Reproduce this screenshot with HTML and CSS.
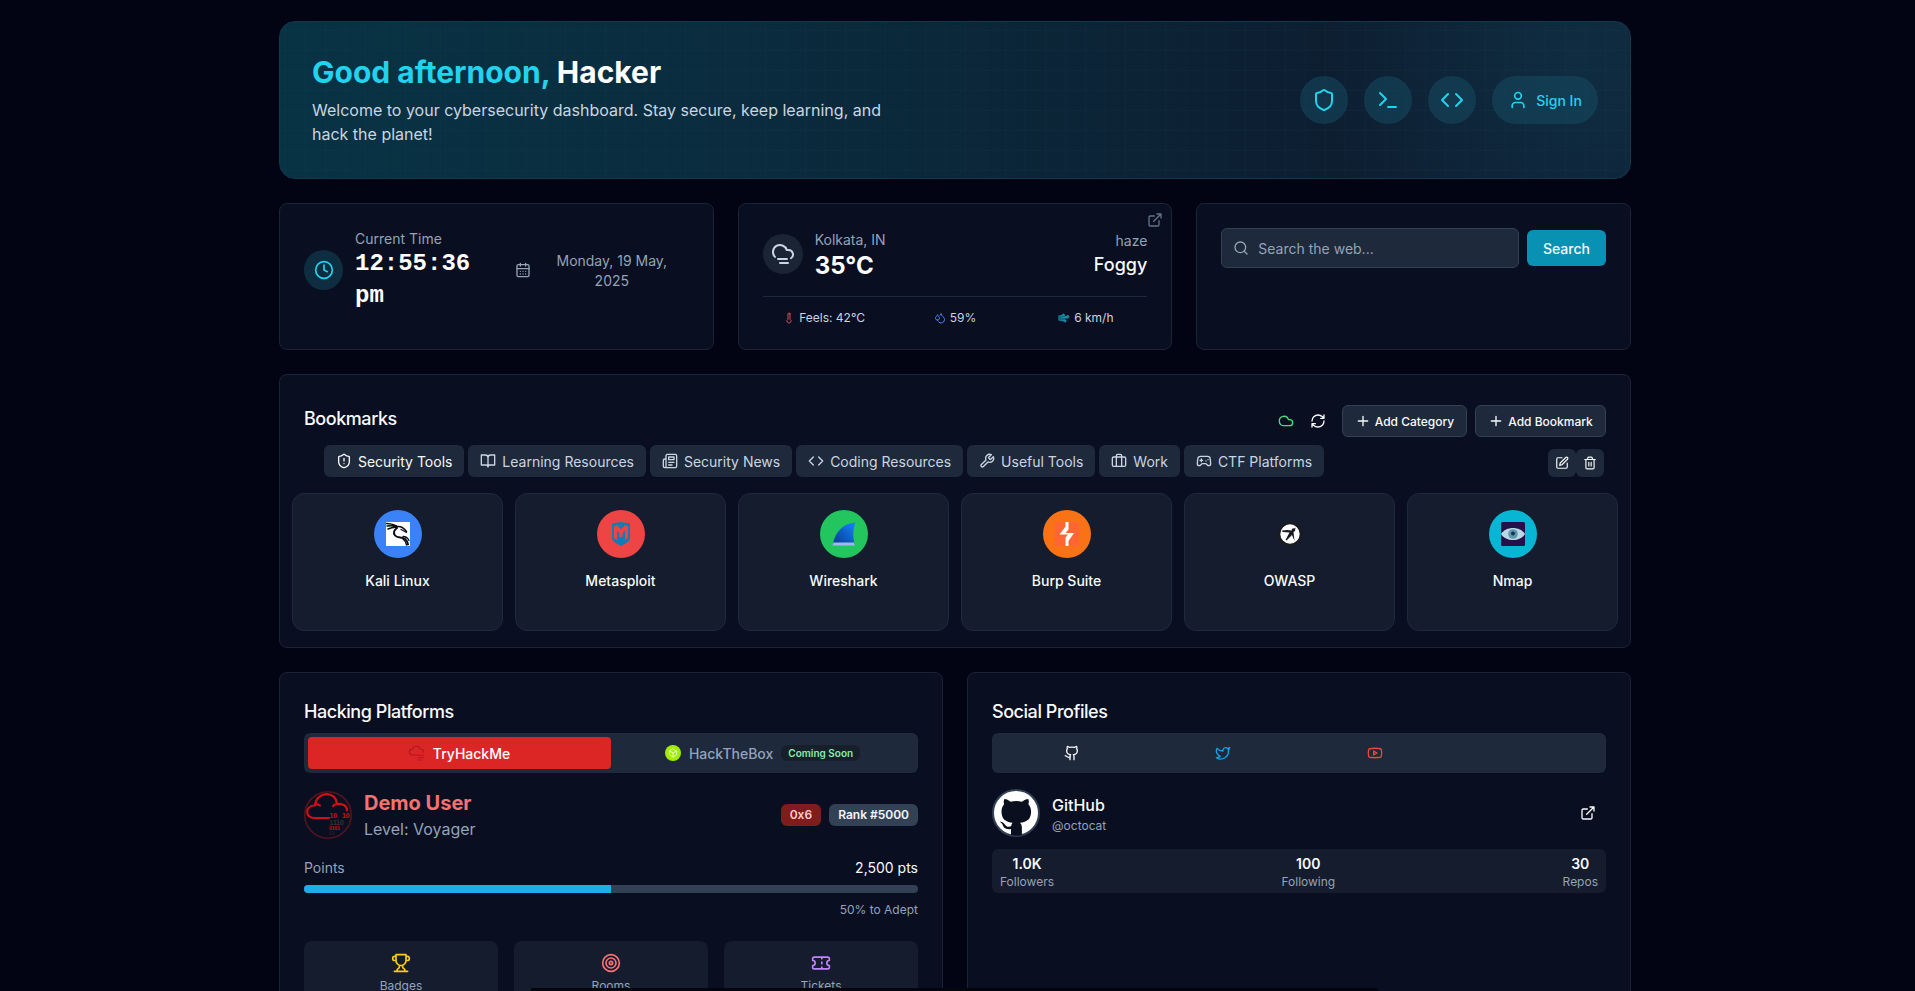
FILE: index.html
```html
<!DOCTYPE html>
<html lang="en">
<head>
<meta charset="utf-8">
<title>Cybersecurity Dashboard</title>
<link rel="stylesheet" href="styles.css">
</head>
<body>
<svg class="defs" aria-hidden="true">
  <symbol id="shield" viewBox="0 0 24 24"><path d="M20 13c0 5-3.5 7.5-7.66 8.95a1 1 0 0 1-.67-.01C7.500 20.500 4 18 4 13V6a1 1 0 0 1 1-1c2 0 4.500-1.200 6.240-2.720a1.170 1.170 0 0 1 1.520 0C14.510 3.810 17 5 19 5a1 1 0 0 1 1 1z"/></symbol>
  <symbol id="terminal" viewBox="0 0 24 24"><path d="m4 17 6-6-6-6M12 19h8"/></symbol>
  <symbol id="code" viewBox="0 0 24 24"><path d="m16 18 6-6-6-6M8 6l-6 6 6 6"/></symbol>
  <symbol id="user" viewBox="0 0 24 24"><path d="M19 21v-2a4 4 0 0 0-4-4H9a4 4 0 0 0-4 4v2"/><circle cx="12" cy="7" r="4"/></symbol>
  <symbol id="clock" viewBox="0 0 24 24"><circle cx="12" cy="12" r="10"/><path d="M12 6v6l4 2"/></symbol>
  <symbol id="calendar" viewBox="0 0 24 24"><rect x="3" y="4" width="18" height="18" rx="2"/><path d="M16 2v4M8 2v4M3 10h18M8 14h.01M12 14h.01M16 14h.01M8 18h.01M12 18h.01M16 18h.01"/></symbol>
  <symbol id="fog" viewBox="0 0 24 24"><path d="M4 14.899A7 7 0 1 1 15.710 8h1.790a4.500 4.500 0 0 1 2.500 8.242M16 17H7M17 21H9"/></symbol>
  <symbol id="external" viewBox="0 0 24 24"><path d="M15 3h6v6M10 14 21 3M18 13v6a2 2 0 0 1-2 2H5a2 2 0 0 1-2-2V8a2 2 0 0 1 2-2h6"/></symbol>
  <symbol id="thermo" viewBox="0 0 24 24"><path d="M14 4v10.540a4 4 0 1 1-4 0V4a2 2 0 0 1 4 0Z"/></symbol>
  <symbol id="drops" viewBox="0 0 24 24"><path d="M7 16.300c2.200 0 4-1.830 4-4.050 0-1.160-.57-2.260-1.710-3.190S7.290 6.750 7 5.300c-.29 1.450-1.140 2.840-2.290 3.760S3 11.100 3 12.250c0 2.220 1.800 4.050 4 4.050z"/><path d="M12.560 6.600A10.970 10.970 0 0 0 14 3.020c.5 2.500 2 4.900 4 6.500s3 3.500 3 5.500a6.980 6.980 0 0 1-11.910 4.970"/></symbol>
  <symbol id="wind" viewBox="0 0 24 24"><path fill="currentColor" d="M17.700 7.700a2.500 2.500 0 1 1 1.800 4.300H2"/><path fill="currentColor" d="M9.600 4.600A2 2 0 1 1 11 8H2"/><path fill="currentColor" d="M12.600 19.400A2 2 0 1 0 14 16H2"/><path d="M2 8v8M5 10h12M5 14h9"/></symbol>
  <symbol id="search" viewBox="0 0 24 24"><circle cx="11" cy="11" r="8"/><path d="m21 21-4.300-4.300"/></symbol>
  <symbol id="cloud" viewBox="0 0 24 24"><path d="M17.500 19H9a7 7 0 1 1 6.710-9h1.790a4.500 4.500 0 1 1 0 9Z"/></symbol>
  <symbol id="refresh" viewBox="0 0 24 24"><path d="M3 12a9 9 0 0 1 9-9 9.750 9.750 0 0 1 6.740 2.740L21 8M21 3v5h-5M21 12a9 9 0 0 1-9 9 9.750 9.750 0 0 1-6.740-2.740L3 16M8 16H3v5"/></symbol>
  <symbol id="plus" viewBox="0 0 24 24"><path d="M5 12h14M12 5v14"/></symbol>
  <symbol id="book" viewBox="0 0 24 24"><path d="M2 3h6a4 4 0 0 1 4 4v14a3 3 0 0 0-3-3H2zM22 3h-6a4 4 0 0 0-4 4v14a3 3 0 0 1 3-3h7z"/></symbol>
  <symbol id="news" viewBox="0 0 24 24"><path d="M4 22h16a2 2 0 0 0 2-2V4a2 2 0 0 0-2-2H8a2 2 0 0 0-2 2v16a2 2 0 0 1-4 0v-9a2 2 0 0 1 2-2h2M18 14h-8M15 18h-5M10 6h8v4h-8z"/></symbol>
  <symbol id="wrench" viewBox="0 0 24 24"><path d="M14.700 6.300a1 1 0 0 0 0 1.400l1.600 1.600a1 1 0 0 0 1.400 0l3.770-3.770a6 6 0 0 1-7.940 7.940l-6.910 6.910a2.120 2.120 0 0 1-3-3l6.910-6.910a6 6 0 0 1 7.940-7.940l-3.760 3.760z"/></symbol>
  <symbol id="case" viewBox="0 0 24 24"><path d="M16 20V4a2 2 0 0 0-2-2h-4a2 2 0 0 0-2 2v16"/><rect x="2" y="6" width="20" height="14" rx="2"/></symbol>
  <symbol id="game" viewBox="0 0 24 24"><path d="M6 11h4M8 9v4M15 12h.01M18 10h.01M17.320 5H6.680a4 4 0 0 0-3.978 3.590C2.604 9.416 2 14.456 2 16a3 3 0 0 0 3 3c1 0 1.500-.5 2-1l1.414-1.414A2 2 0 0 1 9.828 16h4.344a2 2 0 0 1 1.414.586L17 18c.5.5 1 1 2 1a3 3 0 0 0 3-3c0-1.545-.604-6.584-.685-7.258A4 4 0 0 0 17.320 5z"/></symbol>
  <symbol id="edit" viewBox="0 0 24 24"><path d="M12 3H5a2 2 0 0 0-2 2v14a2 2 0 0 0 2 2h14a2 2 0 0 0 2-2v-7"/><path d="M18.375 2.625a2.121 2.121 0 1 1 3 3L12 15l-4 1 1-4z"/></symbol>
  <symbol id="trash" viewBox="0 0 24 24"><path d="M3 6h18M19 6v14a2 2 0 0 1-2 2H7a2 2 0 0 1-2-2V6M8 6V4a2 2 0 0 1 2-2h4a2 2 0 0 1 2 2v2M10 11v6M14 11v6"/></symbol>
  <symbol id="github" viewBox="0 0 24 24"><path d="M15 22v-4a4.800 4.800 0 0 0-1-3.500c3 0 6-2 6-5.500.08-1.250-.27-2.480-1-3.500.28-1.150.28-2.350 0-3.500 0 0-1 0-3 1.500-2.640-.5-5.360-.5-8 0C6 2 5 2 5 2c-.3 1.150-.3 2.350 0 3.500A5.403 5.403 0 0 0 4 9c0 3.500 3 5.500 6 5.500-.39.490-.68 1.050-.85 1.650-.17.600-.22 1.230-.15 1.850v4"/><path d="M9 18c-4.510 2-5-2-7-2"/></symbol>
  <symbol id="twitter" viewBox="0 0 24 24"><path d="M22 4s-.7 2.100-2 3.400c1.600 10-9.400 17.300-18 11.600 2.200.1 4.400-.6 6-2C3 15.500.5 9.600 3 5c2.200 2.600 5.600 4.100 9 4-.9-4.200 4-6.600 7-3.800 1.100 0 3-1.200 3-1.200z"/></symbol>
  <symbol id="youtube" viewBox="0 0 24 24"><path d="M2.500 17a24.120 24.120 0 0 1 0-10 2 2 0 0 1 1.400-1.400 49.560 49.560 0 0 1 16.200 0A2 2 0 0 1 21.500 7a24.120 24.120 0 0 1 0 10 2 2 0 0 1-1.400 1.400 49.550 49.550 0 0 1-16.200 0A2 2 0 0 1 2.500 17"/><path d="m10 15 5-3-5-3z"/></symbol>
  <symbol id="trophy" viewBox="0 0 24 24"><path d="M6 9H4.500a2.500 2.500 0 0 1 0-5H6M18 9h1.500a2.500 2.500 0 0 0 0-5H18M4 22h16M10 14.660V17c0 .55-.47.980-.97 1.210C7.850 18.750 7 20.240 7 22M14 14.660V17c0 .55.470.980.970 1.210C16.150 18.750 17 20.240 17 22M18 2H6v7a6 6 0 0 0 12 0V2Z"/></symbol>
  <symbol id="target" viewBox="0 0 24 24"><circle cx="12" cy="12" r="10"/><circle cx="12" cy="12" r="6"/><circle cx="12" cy="12" r="2"/></symbol>
  <symbol id="ticket" viewBox="0 0 24 24"><path d="M2 9a3 3 0 0 1 0 6v2a2 2 0 0 0 2 2h16a2 2 0 0 0 2-2v-2a3 3 0 0 1 0-6V7a2 2 0 0 0-2-2H4a2 2 0 0 0-2 2ZM13 5v2M13 17v2M13 11v2"/></symbol>
</svg>

<main class="page">
  <header class="hero">
    <div class="hero-text">
      <h1><span class="accent">Good afternoon,</span> Hacker</h1>
      <p>Welcome to your cybersecurity dashboard. Stay secure, keep learning, and hack the planet!</p>
    </div>
    <nav class="hero-nav">
      <a class="round"><svg class="i24"><use href="#shield"/></svg></a>
      <a class="round"><svg class="i24"><use href="#terminal"/></svg></a>
      <a class="round"><svg class="i24"><use href="#code"/></svg></a>
      <a class="round sign-in"><svg class="i20"><use href="#user"/></svg><span>Sign In</span></a>
    </nav>
  </header>

  <div class="widgets">
    <section class="card time-card">
      <div class="time-row">
        <span class="chip chip-cyan"><svg class="i20"><use href="#clock"/></svg></span>
        <div class="time-text">
          <div class="label">Current Time</div>
          <div class="clock">12:55:36 pm</div>
        </div>
        <svg class="i16 cal"><use href="#calendar"/></svg>
        <div class="date">Monday, 19 May, 2025</div>
      </div>
    </section>

    <section class="card weather">
      <svg class="i16 weather-link"><use href="#external"/></svg>
      <div class="weather-top">
        <span class="chip chip-slate"><svg class="i24"><use href="#fog"/></svg></span>
        <div class="place">
          <div>Kolkata, IN</div>
          <div class="temp">35°C</div>
        </div>
        <div class="cond">
          <div>haze</div>
          <div class="cond-name">Foggy</div>
        </div>
      </div>
      <div class="weather-stats">
        <span><svg class="i12 red"><use href="#thermo"/></svg>Feels: 42°C</span>
        <span><svg class="i12 blue"><use href="#drops"/></svg>59%</span>
        <span><svg class="i12 cyan"><use href="#wind"/></svg>6 km/h</span>
      </div>
    </section>

    <section class="card search-card">
      <div class="search-row">
        <div class="search-box"><svg class="i16"><use href="#search"/></svg><span>Search the web...</span></div>
        <button class="search-btn">Search</button>
      </div>
    </section>
  </div>

  <section class="card bookmarks">
    <div class="bm-head">
      <h2>Bookmarks</h2>
      <div class="bm-actions">
        <svg class="i16 green"><use href="#cloud"/></svg>
        <svg class="i16 sync"><use href="#refresh"/></svg>
        <button class="btn"><svg class="i16"><use href="#plus"/></svg>Add Category</button>
        <button class="btn btn-last"><svg class="i16"><use href="#plus"/></svg>Add Bookmark</button>
      </div>
    </div>
    <div class="tabs-row">
      <div class="tabs">
        <span class="tab tab-on"><svg class="i16" viewBox="0 0 24 24"><use href="#shield"/><path d="M12 8v4M12 16h.01"/></svg>Security Tools</span>
        <span class="tab"><svg class="i16"><use href="#book"/></svg>Learning Resources</span>
        <span class="tab"><svg class="i16"><use href="#news"/></svg>Security News</span>
        <span class="tab"><svg class="i16"><use href="#code"/></svg>Coding Resources</span>
        <span class="tab"><svg class="i16"><use href="#wrench"/></svg>Useful Tools</span>
        <span class="tab"><svg class="i16"><use href="#case"/></svg>Work</span>
        <span class="tab"><svg class="i16"><use href="#game"/></svg>CTF Platforms</span>
      </div>
      <div class="tools">
        <span class="tool"><svg class="i14"><use href="#edit"/></svg></span>
        <span class="tool"><svg class="i14"><use href="#trash"/></svg></span>
      </div>
    </div>
    <div class="tiles">
      <a class="tile"><span class="logo logo-blue"><svg class="pic" viewBox="0 0 24 24"><path fill="#fff" d="M0 0h24v24H0z"/><g fill="none" stroke="#0b0d12" stroke-linecap="round"><path stroke-width="1.500" d="M.5 1.500c4 0 7 .8 10 2.500M1 4c4-.5 7-.3 10 .5M2 7c3-1.500 6-2 9-1.800M11 4.500c4-.5 7 1.500 9.500 5"/><path stroke-width="2" d="M11 6c-3 2-4 5-2 7.500 2.500 3 7 1 10 3.500 1.800 1.500 2.500 3 3 5.500"/><path stroke-width="1.300" d="M15 7.500c2 1 4 2 5.500 3M17 14.500c3 0 5 2 6 4M17 17c2 1.500 3 3.500 3.500 6"/></g></svg></span>Kali Linux</a>
      <a class="tile"><span class="logo logo-red"><svg class="pic" viewBox="0 0 24 24"><path fill="#1679b8" d="M3 1.500 12 0l9 1.500V16c0 3-5 6-9 8-4-2-9-5-9-8z"/><path fill="#ef4444" d="M5 4.500 8 3l4 4.500L16 3l3 1.500V16l-3 2V8.500l-2.500 3V15h-3v-3.500L8 8.500V18l-3-2z"/></svg></span>Metasploit</a>
      <a class="tile"><span class="logo logo-green"><svg class="pic" viewBox="0 0 24 24"><defs><linearGradient id="fin" x1="0" y1="1" x2="1" y2="0"><stop offset="0" stop-color="#06398e"/><stop offset="1" stop-color="#1686ff"/></linearGradient></defs><path fill="url(#fin)" d="M1 22C3 10 11 1.500 23.500.5 20.500 8 21 15 22.500 22z"/><path fill="#9cb9f0" d="M1.500 20.500h20.500l.8 3H.5z"/></svg></span>Wireshark</a>
      <a class="tile"><span class="logo logo-orange"><svg class="pic" viewBox="0 0 24 24"><path fill="#ff6633" d="M0 0h24v24H0z"/><path fill="#fff" d="M13.500 0v7.500l-3 3.500H19l-5.500 8v5h-3v-8.500l2.500-3H4.500l6-8V0z"/></svg></span>Burp Suite</a>
      <a class="tile"><span class="logo"><svg class="pic" viewBox="0 0 24 24"><circle cx="12" cy="12" r="10.700" fill="#fff" stroke="#1b1b1b"/><g fill="#171b20"><path d="m4 8.500 5.500-.5 4 .5L18 5.500l-2.500 4.500 1 9-2.500-6-5.500 5.500-1-.5 4-7.500-7-.5z"/><circle cx="15.500" cy="8" r="1.800"/></g></svg></span>OWASP</a>
      <a class="tile"><span class="logo logo-cyan"><svg class="pic" viewBox="0 0 24 24"><rect width="24" height="24" rx="1.500" fill="#24104a"/><path fill="#b9d9e6" d="M0 12c5-8 19-8 24 0-5 8-19 8-24 0z"/><circle cx="12" cy="12" r="4.800" fill="#5d97ad"/><circle cx="12" cy="11.500" r="2" fill="#17324b"/></svg></span>Nmap</a>
    </div>
  </section>

  <div class="columns">
    <section class="card panel">
      <h2>Hacking Platforms</h2>
      <div class="switch two">
        <span class="sw sw-on"><svg class="i16" viewBox="0 0 24 24"><g stroke="#a51b20" stroke-width="1.600"><path d="M12 15H5a4.500 4.500 0 0 1 0-9 6.500 6.500 0 0 1 12 0 5 5 0 0 1 5 5"/><path stroke-dasharray="2 1.500" d="M13 15.500h10M14 19h8M13 22.500h6"/></g></svg><span class="sw-text">TryHackMe</span></span>
        <span class="sw"><svg class="i16 htb" viewBox="0 0 24 24"><circle cx="12" cy="12" r="12" fill="#9fef00"/><g stroke="#e9ffc0" stroke-width="1.500"><path d="m12 6 5 3v6l-5 3-5-3V9zM7 9l5 3 5-3M12 12v6"/></g></svg><span class="sw-text">HackTheBox</span> <em class="soon">Coming Soon</em></span>
      </div>
      <div class="profile thm">
        <svg class="avatar" viewBox="0 0 48 48"><circle cx="24" cy="24" r="23.200" stroke="#51151f" stroke-width="1.600"/><path stroke="#d01014" stroke-width="2.200" d="M25 27H10C1 27 .5 14.500 11 14.500c1.500-15 21-15 22-1.500 6-.8 10 2 10 6.500M11 13.500c2.300-.5 4 0 5 1M29 15c1.200-1.300 2.500-2 4-2"/><g class="bits"><text x="25.500" y="26.500" fill="#d01014">10</text><text x="38" y="26.500" fill="#d01014">10</text><text x="25.500" y="33.800" fill="#393135">1110</text><text x="25" y="39.200" class="tiny" fill="#d01014">0101</text><text x="25" y="43.500" class="tiny" fill="#3b1822">01</text></g></svg>
        <div class="who">
          <div class="who-name">Demo User</div>
          <div class="who-level">Level: Voyager</div>
        </div>
        <div class="badges"><span class="badge badge-red">0x6</span><span class="badge">Rank #5000</span></div>
      </div>
      <div class="points"><span>Points</span><b>2,500 pts</b></div>
      <div class="progress"><div class="progress-fill" style="width:50%"></div></div>
      <div class="next">50% to Adept</div>
      <div class="stats">
        <div class="stat"><svg class="i20 yellow"><use href="#trophy"/></svg>Badges</div>
        <div class="stat"><svg class="i20 rose"><use href="#target"/></svg>Rooms</div>
        <div class="stat"><svg class="i20 purple"><use href="#ticket"/></svg>Tickets</div>
      </div>
    </section>

    <section class="card panel">
      <h2>Social Profiles</h2>
      <div class="switch four">
        <span class="sw"><svg class="i16 white"><use href="#github"/></svg></span>
        <span class="sw"><svg class="i16 sky"><use href="#twitter"/></svg></span>
        <span class="sw"><svg class="i16 tube"><use href="#youtube"/></svg></span>
      </div>
      <div class="profile social">
        <svg class="avatar" viewBox="0 0 48 48"><circle cx="24" cy="24" r="23" fill="#fff" stroke="#334155" stroke-width="2"/><path fill="#0a0f20" stroke="none" d="M19 46v-6c-6 1-7.500-2-8.500-4.500-.8-1.500-2-2-2.700-2.700 4.200-1 5.200 5.200 9 5 1 0 1.800-.3 2.400-.8.200-1.500.8-2.500 1.500-3.200C13.500 33 9.500 30 9.500 22.500c0-3 1-5.500 2.600-7.300-.3-1-.8-3.200.3-5.200 2.500 0 5 1.800 6.200 2.700 3.500-.9 7.800-.9 11.300 0 1.200-.9 4-2.700 6.300-2.700 1 2.200.6 4.200.2 5.200 1.700 1.800 2.700 4.300 2.700 7.300 0 7.500-4 10.500-11.100 11.300 1.200 1.100 1.900 2.700 1.900 5V46c-4 1-7 1-10.900 0z"/></svg>
        <div class="who">
          <div class="gh-name">GitHub</div>
          <div class="gh-handle">@octocat</div>
        </div>
        <svg class="i16 open"><use href="#external"/></svg>
      </div>
      <div class="counts">
        <div><b>1.0K</b>Followers</div>
        <div><b>100</b>Following</div>
        <div><b>30</b>Repos</div>
      </div>
    </section>
  </div>
</main>
<div class="bottom-strip"></div>
</body>
</html>
```

FILE: styles.css
```css
* { box-sizing: border-box; }
html, body { height: 100%; }
body {
  margin: 0;
  padding-right: 5px;
  overflow: hidden;
  background: #020414;
  color: #f8fafc;
  font: 14px/20px Inter, "Liberation Sans", sans-serif;
}
svg { flex: none; display: block; fill: none; stroke: currentColor; stroke-width: 2; stroke-linecap: round; stroke-linejoin: round; }
.defs { position: absolute; width: 0; height: 0; }
h1, h2, p { margin: 0; }
button { font-family: inherit; margin: 0; }
.i12 { width: 12px; height: 12px; }
.i14 { width: 14px; height: 14px; }
.i16 { width: 16px; height: 16px; }
.i20 { width: 20px; height: 20px; }
.i24 { width: 24px; height: 24px; }

.page { width: 1352px; margin: 0 auto; padding-top: 21px; display: flex; flex-direction: column; gap: 24px; }
.page > * { flex: none; }

/* Hero */
.hero {
  height: 158px;
  padding: 32px;
  border: 1px solid #10394a;
  border-radius: 16px;
  display: flex;
  align-items: center;
  justify-content: space-between;
  background:
    linear-gradient(to right, rgba(34, 90, 105, .08) 1px, transparent 1px) 5px 8px / 20px 20px,
    linear-gradient(to bottom, rgba(34, 90, 105, .08) 1px, transparent 1px) 5px 8px / 20px 20px,
    radial-gradient(circle at 96% 20%, rgba(20, 75, 90, .28), transparent 260px),
    linear-gradient(to right, #083344, #0a2b3d 38%, #0d1e31 78%, #0e2138);
}
.hero-text { width: 576px; }
.hero h1 { font-size: 30px; line-height: 36px; font-weight: 700; margin-bottom: 8px; color: #fff; }
.accent { color: #22d3ee; }
.hero p { font-size: 16px; line-height: 24px; color: #cbd5e1; }
.hero-nav { display: flex; gap: 16px; }
.round { width: 48px; height: 48px; border-radius: 24px; background: rgba(22, 78, 99, .5); color: #22d3ee; display: flex; align-items: center; justify-content: center; }
.sign-in { width: 106px; gap: 8px; font-weight: 500; }
.sign-in span { padding-top: 2px; }

/* Cards */
.card { border: 1px solid #1b2335; border-radius: 8px; background: #090e20; padding: 24px; }
.card h2 { font-size: 18px; line-height: 28px; font-weight: 500; letter-spacing: -0.45px; }
.widgets { display: grid; grid-template-columns: repeat(3, 1fr); gap: 24px; height: 147px; }
.label { color: #94a3b8; padding-top: 1px; margin-bottom: -1px; }
.chip { width: 40px; height: 40px; border-radius: 50%; display: flex; align-items: center; justify-content: center; flex: none; }
.chip-cyan { width: 39px; background: #0e2d40; color: #22d3ee; }
.chip-slate { background: #1b2434; color: #cbd5e1; }

.time-row { display: flex; align-items: center; }
.time-text { margin-left: 12px; width: 160px; }
.clock { font: 700 24px/32px "Liberation Mono", monospace; width: 130px; color: #fff; }
.cal { color: #94a3b8; }
.date { color: #94a3b8; flex: 1; padding: 2px 10px 0 14px; text-align: center; }

.weather { position: relative; padding-bottom: 22px; }
.weather-link { position: absolute; top: 8px; right: 8px; color: #64748b; }
.weather-top { display: flex; align-items: center; gap: 12px; padding-bottom: 14px; color: #94a3b8; }
.place { padding-top: 2px; }
.chip-slate { margin-bottom: 2px; }
.temp { font-size: 24px; line-height: 32px; font-weight: 700; color: #fff; }
.cond { margin-left: auto; text-align: right; }
.cond-name { font-size: 18px; line-height: 28px; font-weight: 500; color: #f8fafc; }
.weather-stats { display: grid; grid-template-columns: repeat(3, 1fr); gap: 8px; border-top: 1px solid #1e293b; padding-top: 13px; font-size: 12px; line-height: 16px; color: #cbd5e1; }
.weather-stats span { display: flex; align-items: center; justify-content: center; gap: 4px; }
.red { color: #c95459; }
.red path { fill: currentColor; }
.blue { color: #4b8df0; }
.cyan { color: #168aa5; }

.search-row { display: flex; align-items: center; gap: 8px; }
.search-box { flex: 1; height: 40px; border: 1px solid #334155; border-radius: 6px; background: #1e293b; color: #94a3b8; display: flex; align-items: center; gap: 9px; padding-left: 11px; }
.search-box span { padding-top: 2px; }
.search-btn { width: 79px; height: 36px; border: 0; border-radius: 6px; background: #0891b2; color: #f8fafc; font-size: 14px; font-weight: 500; }

/* Bookmarks */
.bookmarks { height: 274px; padding: 30px 12px 16px; }
.bm-head { display: flex; justify-content: space-between; align-items: center; height: 32px; padding: 0 12px; }
.bm-head h2 { margin-top: -4px; }
.bm-actions { display: flex; align-items: center; }
.green { color: #4ade80; margin-right: 16px; }
.sync { margin-right: 16px; }
.btn { height: 32px; width: 125px; padding: 0; border: 1px solid #334155; border-radius: 6px; background: #1e293b; color: #f8fafc; font-size: 12px; font-weight: 500; display: flex; align-items: center; justify-content: center; gap: 4px; }
.btn-last { width: 131px; margin-left: 8px; }
.tabs-row { display: flex; justify-content: space-between; align-items: flex-end; margin-top: 8px; padding: 0 14px 0 32px; height: 32px; }
.tabs { display: flex; gap: 4px; }
.tab { height: 32px; padding: 2px 12px 0; border-radius: 6px; background: #1e293b; color: #cbd5e1; display: flex; align-items: center; gap: 5.95px; white-space: nowrap; }
.tab svg { margin-top: -3px; }
.tab-on { color: #f8fafc; }
.tools { display: flex; }
.tool { width: 28px; height: 28px; border-radius: 6px; background: #1e293b; display: flex; align-items: center; justify-content: center; }
.tiles { display: grid; grid-template-columns: repeat(6, 1fr); gap: 12px; margin-top: 16px; }
.tile { height: 138px; border: 1px solid #1e293b; border-radius: 12px; background: #141c2d; padding-top: 16px; display: flex; flex-direction: column; align-items: center; gap: 13px; font-weight: 500; }
.logo { width: 48px; height: 48px; border-radius: 50%; display: flex; align-items: center; justify-content: center; }
.pic { width: 24px; height: 24px; stroke: none; }
.logo-blue { background: #3b82f6; }
.logo-red { background: #ef4444; }
.logo-green { background: #22c55e; }
.logo-orange { background: #f97316; }
.logo-cyan { background: #06b6d4; }

/* Lower panels */
.columns { display: grid; grid-template-columns: 1fr 1fr; gap: 24px; }
.panel { height: 480px; padding-top: 25px; }
.switch { height: 40px; margin-top: 7px; padding: 4px; border-radius: 6px; background: #1e293b; display: grid; }
.two { grid-template-columns: 1fr 1fr; }
.four { grid-template-columns: repeat(4, 1fr); }
.sw { display: flex; align-items: center; justify-content: center; gap: 8px; color: #94a3b8; font-weight: 500; border-radius: 4px; }
.sw-text { padding-top: 2px; }
.sw-on { background: #dc2626; color: #fff; }
.htb { stroke: none; }
.soon { font-style: normal; font-size: 10px; line-height: 16px; font-weight: 600; color: #86efac; background: #17202a; border-radius: 6px; padding: 0 7px; }
.profile { display: flex; align-items: center; height: 48px; }
.thm { margin-top: 18px; }
.social { margin-top: 16px; }
.avatar { width: 48px; height: 48px; }
.who { margin-left: 12px; }
.bits text { font: 700 6.8px/1 "Liberation Sans", sans-serif; stroke: none; }
.bits .tiny { font-size: 5px; }
.who-name { font-size: 20px; line-height: 28px; font-weight: 700; color: #f87171; }
.who-level { font-size: 16px; line-height: 24px; color: #94a3b8; }
.badges { margin: 0 0 0 auto; display: flex; gap: 8px; }
.badge { height: 22px; padding: 0 9px; border-radius: 6px; background: #334155; color: #f1f5f9; font-size: 12px; line-height: 22px; font-weight: 600; }
.badge-red { background: #7f1d1d; color: #fecaca; }
.points { display: flex; justify-content: space-between; margin-top: 19px; color: #94a3b8; }
.points b { font-weight: 400; color: #f8fafc; }
.progress { height: 8px; margin-top: 7px; border-radius: 4px; background: #334155; overflow: hidden; }
.progress-fill { height: 100%; background: #1daeea; }
.next { margin-top: 9px; text-align: right; font-size: 12px; line-height: 16px; color: #94a3b8; }
.stats { display: grid; grid-template-columns: repeat(3, 1fr); gap: 16px; margin-top: 23px; }
.stat { height: 80px; border-radius: 8px; background: #141c2d; padding-top: 12px; display: flex; flex-direction: column; align-items: center; gap: 5px; font-size: 12px; line-height: 16px; color: #94a3b8; }
.yellow { color: #facc15; }
.rose { color: #f87171; }
.purple { color: #c084fc; }
.white { color: #f8fafc; }
.sky { color: #0ea5e9; }
.tube { color: #ef4444; }
.gh-name { font-size: 16px; line-height: 24px; font-weight: 500; }
.gh-handle { font-size: 12px; line-height: 16px; color: #94a3b8; padding-top: 1px; margin-bottom: -1px; }
.open { margin: 0 10px 0 auto; }
.counts { height: 44px; margin-top: 12px; padding: 5px 8px 3px; border-radius: 6px; background: #141c2d; display: flex; justify-content: space-between; text-align: center; font-size: 12px; line-height: 16px; color: #94a3b8; }
.counts b { display: block; font-size: 14px; line-height: 20px; font-weight: 600; color: #f8fafc; }

/* Edge of a window docked under the page */
.bottom-strip { position: fixed; left: 531px; top: 988px; width: 847px; height: 3px; background: #03070d; }
```
